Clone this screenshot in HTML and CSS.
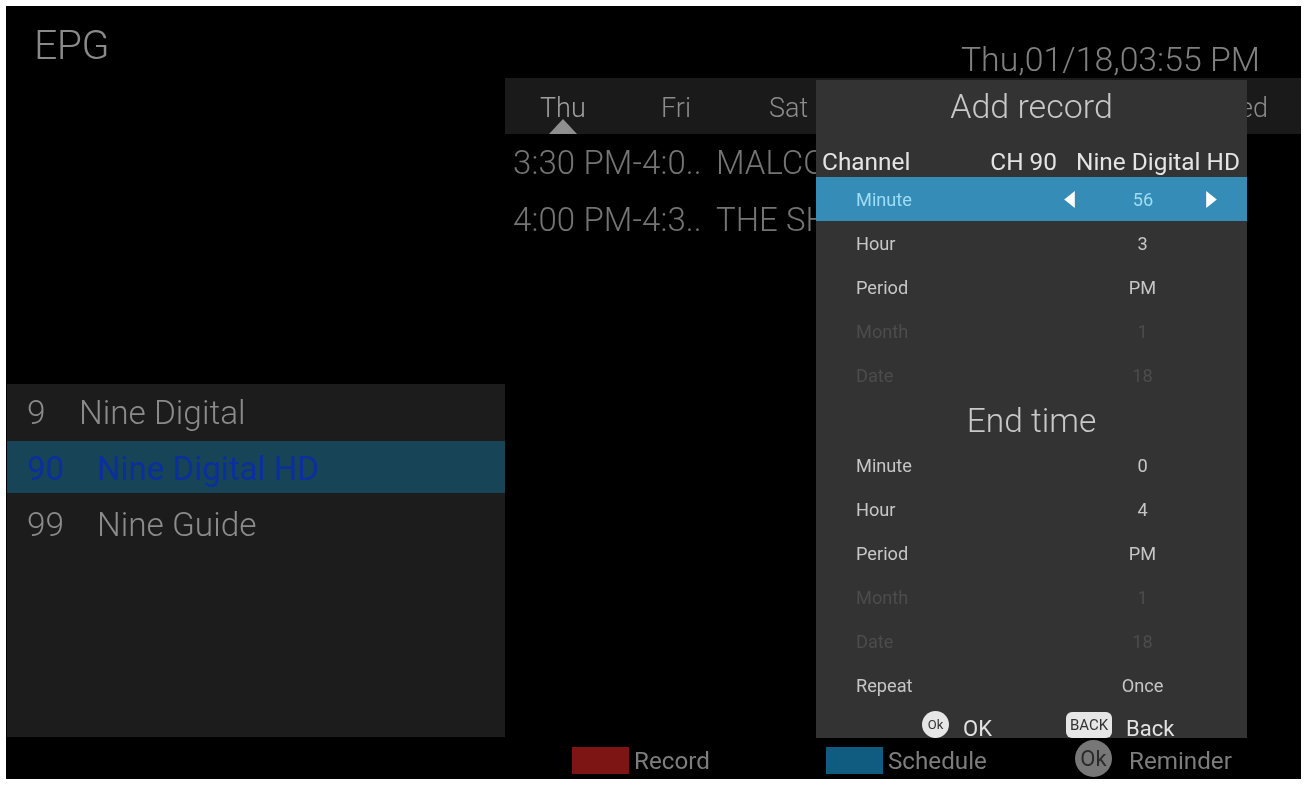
FILE: index.html
```html
<!DOCTYPE html>
<html lang="en">
<head>
<meta charset="utf-8">
<title>EPG</title>
<link rel="stylesheet" href="styles.css">
</head>
<body>
<div class="screen">
  <div class="main">
    <section class="left">
      <h1 class="title">EPG</h1>
      <ul class="channels">
        <li class="channel"><span class="num n1">9</span><span>Nine Digital</span></li>
        <li class="channel active"><span class="num n2">90</span><span>Nine Digital HD</span></li>
        <li class="channel"><span class="num n2">99</span><span>Nine Guide</span></li>
      </ul>
    </section>
    <section class="right">
      <div class="clock">Thu,01/18,03:55 PM</div>
      <div class="days">
        <span class="day day-current">Thu</span>
        <span class="day">Fri</span>
        <span class="day">Sat</span>
        <span class="day-last">Wed</span>
      </div>
      <div class="programs">
        <div class="program"><span class="ptime">3:30 PM-4:0..</span><span class="ptitle">MALCO</span></div>
        <div class="program"><span class="ptime">4:00 PM-4:3..</span><span class="ptitle">THE SH</span></div>
      </div>
    </section>
  </div>
  <footer class="legend">
    <span class="swatch red"></span><span class="legend-text t-record">Record</span>
    <span class="swatch blue"></span><span class="legend-text t-schedule">Schedule</span>
    <span class="ok-big">Ok</span><span class="legend-text">Reminder</span>
  </footer>

  <aside class="modal">
    <h2 class="modal-title">Add record</h2>
    <div class="channel-row"><span>Channel</span><span class="ch-no">CH 90</span><span>Nine Digital HD</span></div>
    <div class="row selected"><span>Minute</span><span class="value"><svg class="arrow" viewBox="0 0 10 16"><path d="M10 0V16L0 8Z"/></svg><span class="sel-value">56</span><svg class="arrow" viewBox="0 0 10 16"><path d="M0 0V16L10 8Z"/></svg></span></div>
    <div class="row"><span>Hour</span><span class="value">3</span></div>
    <div class="row"><span>Period</span><span class="value">PM</span></div>
    <div class="row disabled"><span>Month</span><span class="value">1</span></div>
    <div class="row disabled"><span>Date</span><span class="value">18</span></div>
    <h2 class="modal-title end">End time</h2>
    <div class="row"><span>Minute</span><span class="value">0</span></div>
    <div class="row"><span>Hour</span><span class="value">4</span></div>
    <div class="row"><span>Period</span><span class="value">PM</span></div>
    <div class="row disabled"><span>Month</span><span class="value">1</span></div>
    <div class="row disabled"><span>Date</span><span class="value">18</span></div>
    <div class="row"><span>Repeat</span><span class="value">Once</span></div>
    <div class="actions">
      <span class="ok-small">Ok</span><span class="action-text a-ok">OK</span>
      <span class="back-key">BACK</span><span class="action-text">Back</span>
    </div>
  </aside>
</div>
</body>
</html>
```

FILE: styles.css
```css
* { box-sizing: border-box; }
html, body { margin: 0; height: 100%; background: #fff; }
body { padding: 6px 10px 7px 6px; font-family: Roboto, "Liberation Sans", sans-serif; overflow: hidden; }
ul { list-style: none; margin: 0; padding: 0; }
h1, h2 { margin: 0; font-weight: 300; }

.screen { position: relative; width: 1295px; height: 773px; background: #000; display: flex; flex-direction: column; overflow: hidden; filter: blur(0.5px); }
.main { flex: 1; display: flex; min-height: 0; }

.left { width: 499px; display: flex; flex-direction: column; }
.title { height: 378px; padding: 15px 0 0 28px; font-size: 41px; line-height: 48px; color: #8a8a8a; letter-spacing: -0.5px; }
.channels { flex: 1; background: #1c1c1c; margin-left: 1px; }
.channel { height: 56px; display: flex; align-items: center; padding-left: 20px; font-size: 33.4px; font-weight: 300; color: #8b8b8b; }
.channel:first-child { height: 57px; }
.channel.active { height: 52px; padding-top: 2px; background: #174557; color: #0b2f9c; font-size: 33px; font-weight: 400; }
.channel.active + .channel { height: 62px; }
.num.n1 { width: 52px; }
.num.n2 { width: 70px; }

.right { flex: 1; display: flex; flex-direction: column; min-width: 0; overflow: hidden; }
.clock { height: 72px; padding: 35px 41px 0 0; text-align: right; font-size: 33.8px; line-height: 38px; font-weight: 300; color: #808080; white-space: nowrap; }
.days { height: 56px; background: #1a1a1a; position: relative; display: flex; align-items: center; padding: 4px 0 0 35px; font-size: 27px; font-weight: 300; color: #8c8c8c; }
.day { width: 108px; }
.day-last { margin-left: auto; margin-right: 33px; width: 21px; overflow: hidden; display: flex; justify-content: flex-end; }
.day-current { position: relative; color: #a0a0a0; width: 121px; }
.day-current::after { content: ""; position: absolute; left: 9px; top: 27px; border: 14px solid transparent; border-top: 0; border-bottom: 15px solid #8f8f8f; }
.program { height: 56px; display: flex; align-items: center; padding-left: 8px; font-size: 33px; font-weight: 300; color: #747474; white-space: nowrap; }
.program + .program { height: 58px; }
.ptime { width: 203px; letter-spacing: 0.1px; }
.ptitle { width: 100px; overflow: hidden; }

.legend { height: 42px; flex: none; display: flex; align-items: center; padding: 5px 0 0 566px; }
.swatch { width: 57px; height: 27px; }
.red { background: #7d1514; }
.blue { background: #0f5c80; }
.legend-text { margin-left: 5px; font-size: 24.2px; color: #7d7d7d; font-weight: 400; }
.t-record { width: 192px; }
.t-schedule { width: 188px; }
.ok-big { width: 37px; height: 37px; border-radius: 50%; background: #777; color: #2b2b2b; font-size: 22px; display: flex; align-items: center; justify-content: center; margin-right: 12px; margin-top: -4px; margin-left: -1px; }

.modal { position: absolute; left: 810px; top: 74px; width: 431px; height: 658px; background: #333; color: #ccc; overflow: hidden; }
.modal-title { height: 52px; text-align: center; font-size: 34px; line-height: 53px; color: #c8c8c8; }
.modal-title.end { height: 46px; line-height: 48px; font-size: 33.5px; }
.channel-row { height: 45px; padding: 14px 7px 0 6px; display: flex; align-items: center; font-size: 24.4px; font-weight: 400; color: #e4e4e4; white-space: nowrap; }
.ch-no { margin-left: auto; margin-right: 19px; }
.row { height: 44px; display: flex; align-items: center; padding-left: 40px; font-size: 18.2px; font-weight: 400; color: #c6c6c6; }
.value { position: absolute; left: 245px; width: 163px; display: flex; align-items: center; justify-content: center; }
.row.selected { background: #358db7; color: #9fdcf5; }
.row.selected .value { justify-content: space-between; padding: 0 7px 0 3px; }
.sel-value { margin-left: 5px; }
.arrow { width: 11px; height: 17px; fill: #fff; }
.row.disabled { color: #4c4c4c; }
.actions { height: 44px; display: flex; align-items: center; padding-left: 106px; }
.ok-small { width: 27px; height: 27px; border-radius: 50%; background: #e6e6e6; color: #333; font-size: 13px; display: flex; align-items: center; justify-content: center; margin-top: -10px; }
.action-text { margin-left: 14px; font-size: 22px; color: #e2e2e2; margin-top: -2px; }
.a-ok { width: 103px; }
.back-key { width: 46px; height: 26px; border-radius: 6px; background: #e6e6e6; color: #333; font-size: 15px; display: flex; align-items: center; justify-content: center; margin-top: -8px; }
```
